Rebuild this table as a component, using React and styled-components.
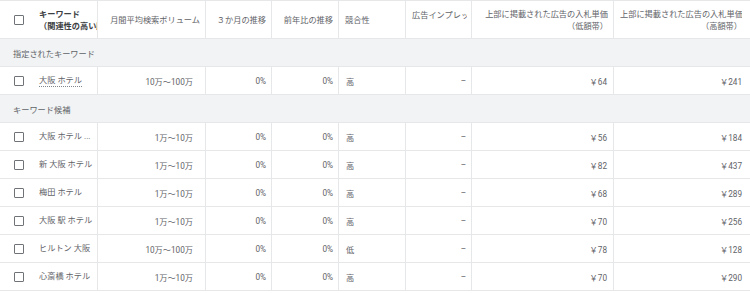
import React from "react";
import styled, { createGlobalStyle } from "styled-components";

const Global = createGlobalStyle`
  html, body { margin: 0; padding: 0; background: #fff; }
  body {
    font-family: Roboto, "Noto Sans CJK JP", "Noto Sans", sans-serif;
    font-size: 8.2px;
    color: #5f6368;
    -webkit-font-smoothing: antialiased;
  }
`;

const COLS = "98px 108px 66px 67px 67px 66px 142px 136px";
const LINE = "#e6e7e9";

const Table = styled.div`
  width: 750px;
  border-top: 1px solid ${LINE};
`;

const HeaderRow = styled.div`
  display: grid;
  grid-template-columns: ${COLS};
  height: 37px;
  border-bottom: 1px solid ${LINE};
`;

const HeaderCell = styled.div`
  display: flex;
  align-items: ${(p) => (p.$top ? "flex-start" : "center")};
  justify-content: ${(p) => (p.$left ? "flex-start" : "flex-end")};
  padding: ${(p) => (p.$top ? "8px 4px 0 6px" : "0 5px 0 6px")};
  border-right: 1px solid ${LINE};
  color: #5f6368;
  line-height: 12px;
  overflow: hidden;
  white-space: nowrap;
  min-width: 0;
  &:last-child { border-right: none; padding-right: 8px; }
`;

const HeaderText = styled.div`
  text-align: ${(p) => (p.$left ? "left" : "right")};
  overflow: hidden;
  min-width: 0;
`;

const KeywordHead = styled.div`
  display: flex;
  align-items: center;
  padding-left: 14px;
  border-right: 1px solid ${LINE};
  overflow: hidden;
  white-space: nowrap;
  min-width: 0;
`;

const KeywordHeadText = styled.div`
  margin-left: 15px;
  min-width: 0;
  overflow: hidden;
  color: #3c4043;
  font-weight: 700;
  line-height: 12px;
  text-align: left;
`;

const Checkbox = styled.span`
  display: inline-block;
  flex: none;
  width: 8px;
  height: 8px;
  border: 1.5px solid #6f7377;
  border-radius: 1px;
`;

const SectionRow = styled.div`
  height: 27px;
  display: flex;
  align-items: center;
  padding-left: 13px;
  background: #f1f3f4;
  border-bottom: 1px solid ${LINE};
  color: #5f6368;
`;

const Row = styled.div`
  display: grid;
  grid-template-columns: ${COLS};
  height: 27px;
  border-bottom: 1px solid ${LINE};
`;

const Cell = styled.div`
  display: flex;
  align-items: center;
  justify-content: ${(p) => (p.$left ? "flex-start" : "flex-end")};
  padding: 0 ${(p) => p.$pr ?? 5}px 0 ${(p) => (p.$left ? 7 : 6)}px;
  border-right: 1px solid ${LINE};
  white-space: nowrap;
  overflow: hidden;
  &:last-child { border-right: none; }
`;

const KeywordCell = styled.div`
  display: flex;
  align-items: center;
  padding-left: 14px;
  border-right: 1px solid ${LINE};
  white-space: nowrap;
  overflow: hidden;
`;

const KeywordText = styled.span`
  margin-left: 15px;
  color: #5f6368;
  padding-bottom: 1px;
  border-bottom: ${(p) => (p.$dotted ? "1px dotted #80868b" : "none")};
  line-height: 10px;
`;

const seeded = [
  { kw: "大阪 ホテル", vol: "10万～100万", comp: "高", low: "￥64", high: "￥241", dotted: true },
];

const ideas = [
  { kw: "大阪 ホテル ...", vol: "1万～10万", comp: "高", low: "￥56", high: "￥184" },
  { kw: "新 大阪 ホテル", vol: "1万～10万", comp: "高", low: "￥82", high: "￥437" },
  { kw: "梅田 ホテル", vol: "1万～10万", comp: "高", low: "￥68", high: "￥289" },
  { kw: "大阪 駅 ホテル", vol: "1万～10万", comp: "高", low: "￥70", high: "￥256" },
  { kw: "ヒルトン 大阪", vol: "10万～100万", comp: "低", low: "￥78", high: "￥128" },
  { kw: "心斎橋 ホテル", vol: "1万～10万", comp: "高", low: "￥70", high: "￥290" },
];

function DataRow({ r }) {
  return (
    <Row>
      <KeywordCell>
        <Checkbox />
        <KeywordText $dotted={r.dotted}>{r.kw}</KeywordText>
      </KeywordCell>
      <Cell $pr={12}>{r.vol}</Cell>
      <Cell>0%</Cell>
      <Cell>0%</Cell>
      <Cell $left>{r.comp}</Cell>
      <Cell>–</Cell>
      <Cell $pr={6}>{r.low}</Cell>
      <Cell $pr={8}>{r.high}</Cell>
    </Row>
  );
}

export default function App() {
  return (
    <>
      <Global />
      <Table>
        <HeaderRow>
          <KeywordHead>
            <Checkbox />
            <KeywordHeadText>
              キーワード
              <br />
              （関連性の高い順）
            </KeywordHeadText>
          </KeywordHead>
          <HeaderCell>
            <HeaderText>月間平均検索ボリューム</HeaderText>
          </HeaderCell>
          <HeaderCell>
            <HeaderText>３か月の推移</HeaderText>
          </HeaderCell>
          <HeaderCell>
            <HeaderText>前年比の推移</HeaderText>
          </HeaderCell>
          <HeaderCell $left>
            <HeaderText $left>競合性</HeaderText>
          </HeaderCell>
          <HeaderCell $left $top>
            <HeaderText $left>広告インプレッション シェア</HeaderText>
          </HeaderCell>
          <HeaderCell>
            <HeaderText>
              上部に掲載された広告の入札単価
              <br />
              （低額帯）
            </HeaderText>
          </HeaderCell>
          <HeaderCell>
            <HeaderText>
              上部に掲載された広告の入札単価
              <br />
              （高額帯）
            </HeaderText>
          </HeaderCell>
        </HeaderRow>
        <SectionRow>指定されたキーワード</SectionRow>
        {seeded.map((r) => (
          <DataRow key={r.kw} r={r} />
        ))}
        <SectionRow>キーワード候補</SectionRow>
        {ideas.map((r) => (
          <DataRow key={r.kw} r={r} />
        ))}
      </Table>
    </>
  );
}
